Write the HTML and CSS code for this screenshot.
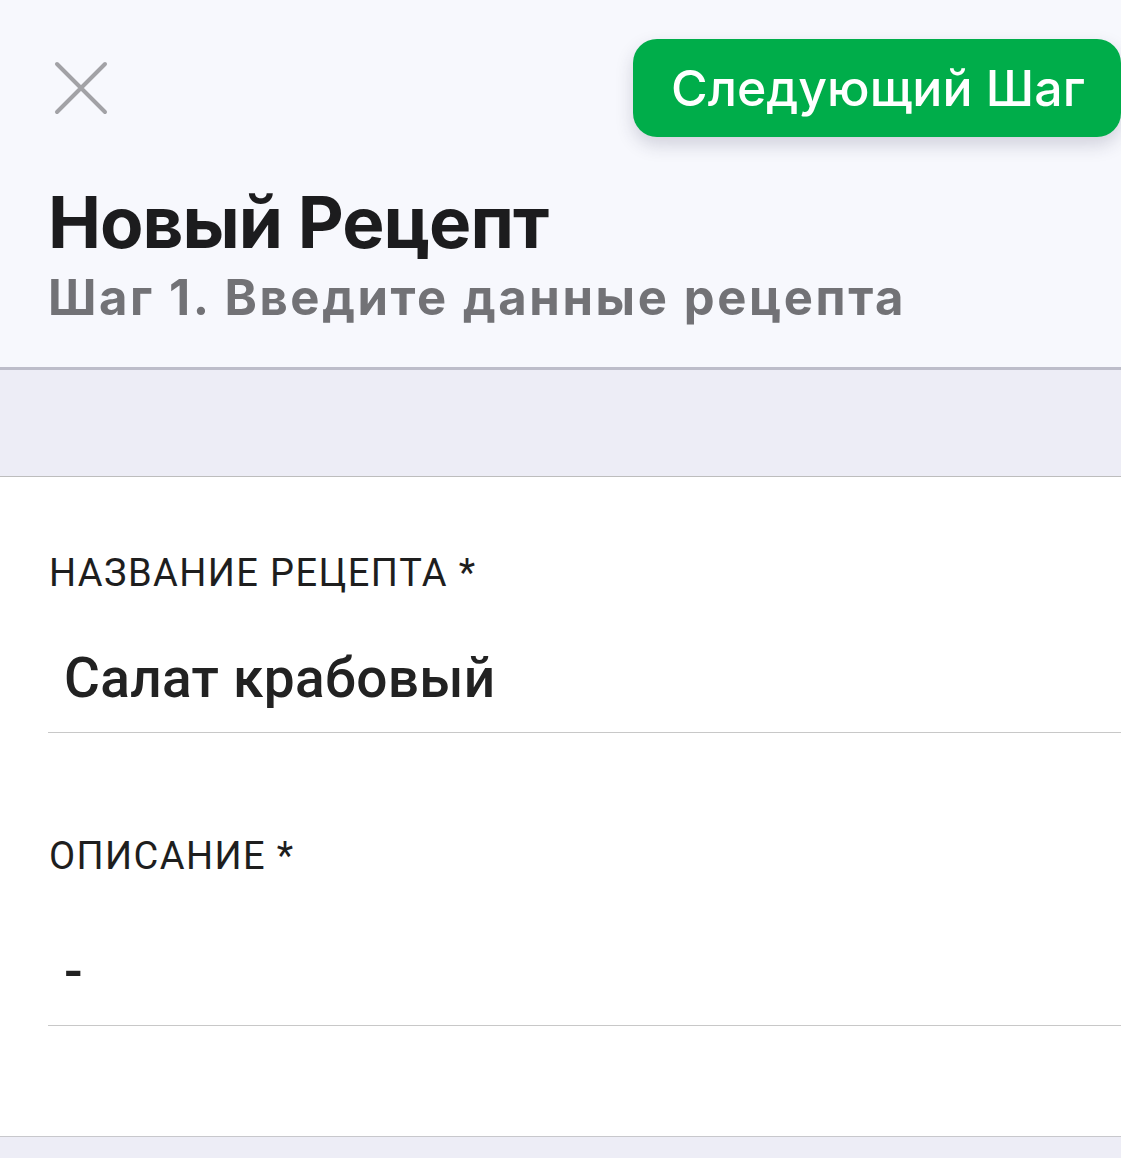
FILE: index.html
```html
<!DOCTYPE html>
<html lang="ru">
<head>
<meta charset="utf-8">
<title>Новый Рецепт</title>
<link rel="stylesheet" href="styles.css">
</head>
<body>
<header class="header">
  <div class="topbar">
    <button class="close" aria-label="Закрыть">
      <svg width="54" height="54" viewBox="0 0 54 54"><path d="M3 3 L51 51 M51 3 L3 51" stroke="#a2a2a6" stroke-width="4" stroke-linecap="round" fill="none"/></svg>
    </button>
    <button class="next">Следующий Шаг</button>
  </div>
  <h1 class="title">Новый Рецепт</h1>
  <p class="subtitle">Шаг 1. Введите данные рецепта</p>
</header>
<div class="band"></div>
<main class="form">
  <div class="field field-name">
    <div class="label">НАЗВАНИЕ РЕЦЕПТА *</div>
    <div class="value">Салат крабовый</div>
  </div>
  <div class="field field-desc">
    <div class="label">ОПИСАНИЕ *</div>
    <div class="value">-</div>
  </div>
</main>
<div class="band-bottom"></div>
</body>
</html>
```
FILE: styles.css
```css
* { box-sizing: border-box; }
html, body { margin: 0; padding: 0; }
body {
  width: 1121px;
  height: 1158px;
  overflow: hidden;
  background: #ededf6;
  font-family: Inter, "Noto Sans", sans-serif;
}
.header {
  background: #f7f8fd;
  border-bottom: 3px solid #bdbdca;
  padding: 0 0 0 48px;
  height: 370px;
}
.topbar {
  display: flex;
  justify-content: space-between;
  align-items: flex-start;
  padding-top: 39px;
  height: 137px;
}
.close {
  border: 0;
  background: none;
  padding: 0;
  margin-top: 22px;
  margin-left: 6px;
  width: 54px;
  height: 54px;
  cursor: pointer;
}
.close svg { display: block; }
.next {
  height: 98px;
  width: 488px;
  border: 0;
  border-radius: 24px;
  background: #00ad4a;
  color: #fff;
  font-family: Inter, "Noto Sans", sans-serif;
  font-size: 50px;
  font-weight: 500;
  padding: 0 0 0 38px;
  text-align: left;
  box-shadow: 0 8px 18px rgba(40, 40, 70, 0.18);
  cursor: pointer;
}
.title {
  margin: 45px 0 0;
  font-size: 71px;
  line-height: 80px;
  letter-spacing: -1px;
  font-weight: 700;
  color: #1c1c1e;
}
.subtitle {
  margin: 8px 0 0;
  font-size: 49px;
  line-height: 56px;
  letter-spacing: 2.6px;
  font-weight: 700;
  color: #727276;
}
.band {
  height: 107px;
  background: #ededf6;
  border-bottom: 1px solid #bdbdbd;
}
.form {
  background: #fff;
  height: 660px;
  padding: 72px 0 0 48px;
  border-bottom: 1px solid #c8c8cc;
}
.field {
  border-bottom: 1px solid #c8c8c8;
  padding-bottom: 21px;
}
.label {
  font-family: Roboto, "Noto Sans", sans-serif;
  font-size: 38px;
  line-height: 48px;
  letter-spacing: 1.4px;
  font-weight: 400;
  color: #1e1e1e;
  padding-left: 1px;
}
.value {
  font-family: Roboto, "Noto Sans", sans-serif;
  font-size: 55px;
  line-height: 66px;
  letter-spacing: 0.3px;
  font-weight: 500;
  color: #222;
  padding-left: 16px;
}
.field-name .value { margin-top: 48px; }
.field-desc { margin-top: 99px; }
.field-desc .value { margin-top: 58px; }
.band-bottom {
  height: 21px;
  background: #ededf6;
}
```
